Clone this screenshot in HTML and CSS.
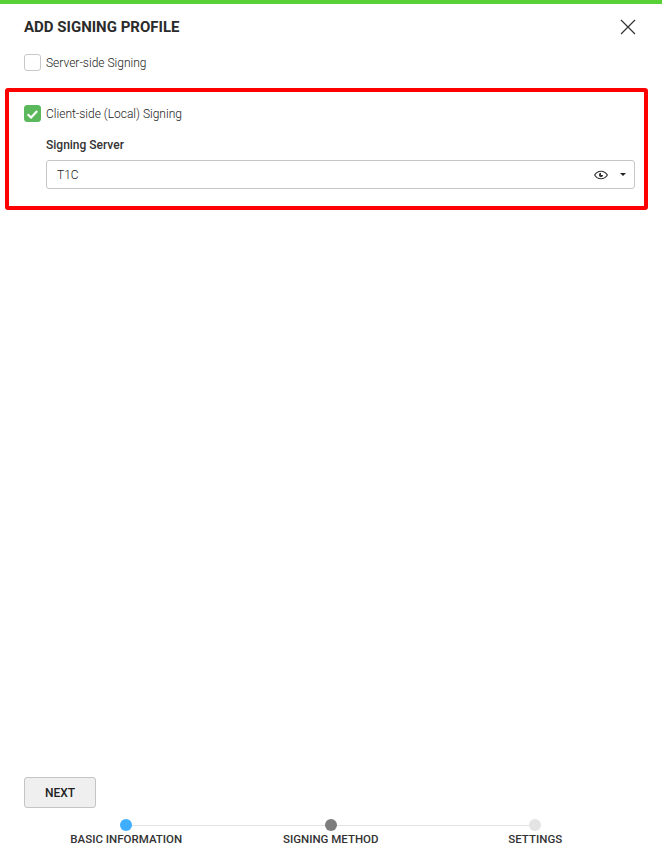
FILE: index.html
```html
<!DOCTYPE html>
<html lang="en">
<head>
    <meta charset="UTF-8">
    <title>Add Signing Profile</title>
    <link rel="stylesheet" href="styles.css">
</head>
<body>
    <div class="panel">
        <header class="panel-header">
            <h1 class="panel-title">ADD SIGNING PROFILE</h1>
            <button class="close-btn" aria-label="Close">
                <svg viewBox="0 0 16 16" width="16" height="16">
                    <path d="M1 1L15 15M15 1L1 15" stroke="#333" stroke-width="1.2" fill="none"/>
                </svg>
            </button>
        </header>

        <label class="check-row server-row">
            <span class="check-box"></span>
            <span class="check-label">Server-side Signing</span>
        </label>

        <section class="highlight">
            <label class="check-row">
                <span class="check-box checked">
                    <svg viewBox="0 0 16 16" width="16" height="16">
                        <path d="M2.800 8.200L6.500 11.800L13 4.800" stroke="#fff" stroke-width="2.300" fill="none"/>
                    </svg>
                </span>
                <span class="check-label">Client-side (Local) Signing</span>
            </label>
            <div class="field">
                <div class="field-label">Signing Server</div>
                <div class="select">
                    <span class="select-value">T1C</span>
                    <svg class="eye-icon" viewBox="0 0 24 24" width="16" height="16">
                        <path d="M12 5.500C7.300 5.500 3.500 8.200 1.500 12c2 3.800 5.800 6.500 10.500 6.500s8.500-2.700 10.500-6.500c-2-3.800-5.800-6.500-10.500-6.500zm0 11.400c-3.500 0-6.800-1.900-8.600-4.900 1.800-3 5.100-4.900 8.600-4.900s6.800 1.900 8.600 4.900c-1.800 3-5.100 4.900-8.600 4.900z"/>
                        <path d="M12 8.800a3.200 3.200 0 1 0 3.200 3.200h-3.200z"/>
                    </svg>
                    <span class="caret"></span>
                </div>
            </div>
        </section>

        <div class="spacer"></div>

        <div class="actions">
            <button class="next-btn">NEXT</button>
        </div>

        <div class="stepper">
            <div class="step">
                <span class="dot dot-active"></span>
                <span class="step-label">BASIC INFORMATION</span>
            </div>
            <div class="step">
                <span class="dot dot-current"></span>
                <span class="step-label">SIGNING METHOD</span>
            </div>
            <div class="step">
                <span class="dot dot-todo"></span>
                <span class="step-label">SETTINGS</span>
            </div>
        </div>
    </div>
</body>
</html>
```

FILE: styles.css
```css
* {
    margin: 0;
    padding: 0;
    box-sizing: border-box;
}

body {
    font-family: Roboto, "Liberation Sans", sans-serif;
    background: #fff;
    color: #333;
}

.panel {
    display: flex;
    flex-direction: column;
    height: 855px;
    border-top: 4px solid #57d136;
    overflow: hidden;
}

/* Header */
.panel-header {
    display: flex;
    justify-content: space-between;
    align-items: center;
    height: 46px;
    padding: 0 26px 0 24px;
}

.panel-title {
    font-size: 15px;
    font-weight: 700;
    line-height: 46px;
    color: #2b2b2b;
}

.close-btn {
    display: flex;
    border: none;
    background: none;
}

/* Checkboxes */
.check-row {
    display: flex;
    align-items: center;
    gap: 5px;
    height: 17px;
}

.server-row {
    margin: 4px 0 0 24px;
}

.check-box {
    display: flex;
    width: 17px;
    height: 17px;
    background: #fff;
    border: 1px solid #c8c8c8;
    border-radius: 3px;
}

.check-box.checked {
    align-items: center;
    justify-content: center;
    background: #5cb85c;
    border-color: #5cb85c;
}

.check-label {
    font-size: 12px;
    font-weight: 300;
    color: #222;
}

/* Red callout */
.highlight {
    margin: 17px 14px 0 5px;
    height: 122px;
    padding: 13px 9px 0 15px;
    border: 4px solid #f00;
    border-radius: 3px;
}

.field {
    margin: 16px 0 0 22px;
}

.field-label {
    font-size: 12px;
    font-weight: 500;
    line-height: 14px;
    color: #333;
}

.select {
    display: flex;
    align-items: center;
    height: 29px;
    margin-top: 8px;
    padding: 0 8px 0 10px;
    border: 1px solid #c6c6c6;
    border-radius: 3px;
}

.select-value {
    flex: 1;
    font-size: 12px;
    font-weight: 300;
    color: #222;
}

.eye-icon {
    fill: #333;
    margin-right: 1px;
}

.caret {
    width: 0;
    height: 0;
    margin-left: 10px;
    border-left: 3px solid transparent;
    border-right: 3px solid transparent;
    border-top: 3px solid #222;
}

.spacer {
    flex: 1;
}

/* Footer */
.actions {
    padding-left: 24px;
}

.next-btn {
    width: 72px;
    height: 31px;
    font-family: inherit;
    font-size: 12px;
    font-weight: 500;
    color: #222;
    background: #efefef;
    border: 1px solid #c4c4c4;
    border-radius: 3px;
}

.stepper {
    position: relative;
    display: grid;
    grid-template-columns: repeat(3, 204.500px);
    margin: 11px 0 9px 24px;
}

.stepper::before {
    content: "";
    position: absolute;
    top: 6px;
    left: 102px;
    width: 409px;
    height: 1px;
    background: #e2e2e2;
}

.step {
    position: relative;
    display: flex;
    flex-direction: column;
    align-items: center;
}

.dot {
    width: 12px;
    height: 12px;
    border-radius: 50%;
}

.dot-active {
    background: #40aeff;
}

.dot-current {
    background: #7d7d7d;
}

.dot-todo {
    background: #e4e4e4;
}

.step-label {
    margin-top: 1px;
    font-size: 11.500px;
    font-weight: 500;
    line-height: 14px;
    color: #333;
}
```
